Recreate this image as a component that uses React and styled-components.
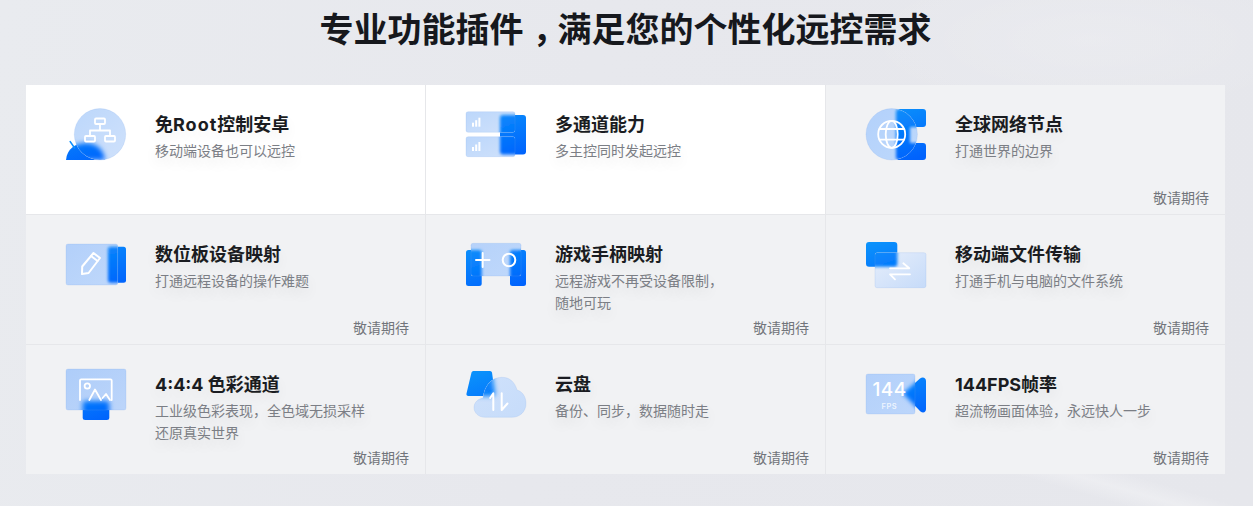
import React, { useId } from "react";
import styled, { createGlobalStyle } from "styled-components";

const Global = createGlobalStyle`
  html, body { margin: 0; padding: 0; }
  body { font-family: Inter, "Noto Sans CJK SC", "Noto Sans", sans-serif; }
`;

const Page = styled.main`
  width: 1253px;
  height: 506px;
  overflow: hidden;
  box-sizing: border-box;
  padding: 0 28px 0 26px;
  background:
    linear-gradient(16deg, transparent 0 34%, rgba(255,255,255,.26) 50%, transparent 66%) no-repeat 1000px 474px / 253px 32px,
    radial-gradient(ellipse 240px 80px at 1090px 40px, rgba(255,255,255,.16), transparent),
    linear-gradient(100deg, #e9ebef 0%, #e7e8ed 45%, #e6e7ec 100%);
`;

const Heading = styled.h1`
  margin: 0;
  height: 85px;
  padding-top: 6px;
  box-sizing: border-box;
  font-size: 34px;
  line-height: 48px;
  font-weight: 700;
  text-align: center;
  color: #16181d;
`;

const Comma = styled.span`
  font-feature-settings: "halt";
  padding: 0 8px 0 9px;
`;

const Grid = styled.section`
  display: grid;
  grid-template-columns: 400px 400px 399px;
  grid-template-rows: 130px 130px 129px;
`;

const Cell = styled.article`
  display: flex;
  flex-direction: column;
  box-sizing: border-box;
  padding: 20px 16px 0 40px;
  background: ${(p) => (p.$active ? "#ffffff" : "#f1f2f4")};
  border-right: ${(p) => (p.$last ? "0" : "1px solid #e6e7ea")};
  border-bottom: ${(p) => (p.$bottom ? "0" : "1px solid #e6e7ea")};
`;

const Main = styled.div`
  display: flex;
  gap: 29px;
  height: 83px;
`;

const IconBox = styled.div`
  flex: none;
  width: 60px;
  height: 60px;
  svg { display: block; overflow: visible; }
`;

const Copy = styled.div`
  padding-top: 6px;
`;

const Title = styled.h3`
  margin: 0 0 1px;
  font-size: 18px;
  line-height: 28px;
  font-weight: 700;
  color: #1a1c21;
  text-shadow: 0 6px 14px rgba(0, 0, 0, 0.06);
`;

const Wide = styled.span`
  letter-spacing: 1px;
`;

const Desc = styled.p`
  margin: 0;
  font-size: 14px;
  line-height: 22px;
  color: #7b7e85;
  white-space: pre-line;
  text-shadow: 0 6px 14px rgba(0, 0, 0, 0.1);
`;

const Soon = styled.span`
  align-self: flex-end;
  font-size: 14px;
  line-height: 20px;
  color: #72757b;
`;

const Stroke = { fill: "none", stroke: "#fff", strokeWidth: 1.8, strokeLinecap: "round", strokeLinejoin: "round" };

function Frosted({ blue, glass, glassFill, children, blur = 3.2 }) {
  const id = useId().replace(/[^a-zA-Z0-9]/g, "");
  return (
    <svg width="60" height="60" viewBox="0 0 60 60">
      <defs>
        <linearGradient id={`${id}b`} gradientUnits="userSpaceOnUse" x1="10" y1="0" x2="30" y2="60">
          <stop offset="0" stopColor="#0c97fb" />
          <stop offset="1" stopColor="#0062fd" />
        </linearGradient>
        <linearGradient id={`${id}g`} x1="0" y1="0" x2="1" y2="1">
          {(glassFill || ["#bcd7fb", "#cfe1fb"]).map((c, i) => (
            <stop key={i} offset={i} stopColor={c} />
          ))}
        </linearGradient>
        <filter id={`${id}f`} x="-30%" y="-30%" width="160%" height="160%">
          <feGaussianBlur stdDeviation={blur} />
        </filter>
        <mask id={`${id}m`} maskUnits="userSpaceOnUse" x="-5" y="-5" width="70" height="70">
          <rect x="-5" y="-5" width="70" height="70" fill="#fff" />
          {glass("#000")}
        </mask>
        <clipPath id={`${id}c`}>{glass("#000")}</clipPath>
      </defs>
      <g mask={`url(#${id}m)`} fill={`url(#${id}b)`}>{blue}</g>
      {glass(`url(#${id}g)`)}
      <g clipPath={`url(#${id}c)`}>
        <g filter={`url(#${id}f)`} fill={`url(#${id}b)`}>{blue}</g>
      </g>
      <g stroke="rgba(120,165,235,.3)" strokeWidth=".6">{glass("none")}</g>
      {children}
    </svg>
  );
}

const RootIcon = () => (
  <Frosted
    blue={
      <>
        <path d="M0 55 C1 44 9 38 20 38 C31 38 38 45 39 55 Z" />
        <path d="M4.2 36.6 L8.6 43" stroke="#0d8ffb" strokeWidth="1.6" strokeLinecap="round" />
      </>
    }
    glass={(f) => <circle cx="34" cy="29.3" r="25.7" fill={f} />}
    blur={2.8}
  >
    <g {...Stroke}>
      <rect x="29" y="13.5" width="10" height="5.5" rx="1" />
      <path d="M34 19 V25.5 M24 31 V25.5 H44 V31" />
      <rect x="19" y="31" width="10" height="5.5" rx="1" />
      <rect x="39" y="31" width="10" height="5.5" rx="1" />
    </g>
  </Frosted>
);

const Bars = ({ y }) => (
  <g fill="#fff">
    <rect x="6" y={y + 5} width="2" height="4" />
    <rect x="9.2" y={y + 2.5} width="2" height="6.5" />
    <rect x="12.4" y={y} width="2" height="9" />
  </g>
);

const ChannelIcon = () => (
  <Frosted
    blue={<rect x="34" y="10" width="26" height="39.5" rx="3" />}
    glass={(f) => (
      <>
        <rect x="0" y="6.7" width="49" height="20.6" rx="2" fill={f} />
        <rect x="0" y="31.7" width="49" height="20" rx="2" fill={f} />
      </>
    )}
    blur={1.6}
  >
    <Bars y={12.7} />
    <Bars y={37} />
  </Frosted>
);

const GlobeIcon = () => (
  <Frosted
    blue={
      <path d="M30 7 a3 3 0 0 1 3 -3 H57 a3 3 0 0 1 3 3 V19 a3 3 0 0 1 -3 3 H44 V38 H57 a3 3 0 0 1 3 3 V52 a3 3 0 0 1 -3 3 H33 a3 3 0 0 1 -3 -3 Z" />
    }
    glass={(f) => <circle cx="25.7" cy="29.3" r="25.7" fill={f} />}
    glassFill={["#b3d1fb", "#bdd8fb"]}
    blur={1.6}
  >
    <g {...Stroke}>
      <circle cx="25.7" cy="29.3" r="13.5" />
      <ellipse cx="25.7" cy="29.3" rx="6" ry="13.5" />
      <path d="M13.6 24 H37.8 M13.6 34.6 H37.8" />
    </g>
  </Frosted>
);

const PenIcon = () => (
  <Frosted
    blue={<rect x="42" y="11.7" width="18" height="36" rx="2.5" />}
    glass={(f) => <rect x="0" y="9" width="51.7" height="41" rx="2" fill={f} />}
    glassFill={["#b3d0fa", "#bfd8fb"]}
    blur={1.8}
  >
    <g {...Stroke} strokeWidth="2">
      <path d="M16 39 L16.2 31.5 L27.5 18 L34 23 L22.6 38 Z" />
      <path d="M25 21 L31.6 26" />
    </g>
  </Frosted>
);

const PadIcon = () => (
  <Frosted
    blue={
      <>
        <rect x="0" y="15" width="15.7" height="36" rx="2.5" />
        <rect x="44" y="15" width="16" height="36" rx="2.5" />
      </>
    }
    glass={(f) => <rect x="5" y="8.3" width="50" height="32.7" rx="2" fill={f} />}
    glassFill={["#b6d2fa", "#bfd8fb"]}
    blur={1.6}
  >
    <g {...Stroke} strokeWidth="2">
      <path d="M10 25 H23.5 M16.7 18 V32" />
      <circle cx="43" cy="25" r="6.3" />
    </g>
  </Frosted>
);

const TransferIcon = () => (
  <Frosted
    blue={<rect x="0" y="7" width="31.3" height="24.7" rx="3" />}
    glass={(f) => <rect x="9" y="17.7" width="51" height="35" rx="2" fill={f} />}
    glassFill={["#e6eefb", "#c6dbf9"]}
    blur={1.6}
  >
    <g {...Stroke}>
      <path d="M24 33.3 H43.3 L37.3 28.3" />
      <path d="M44 39.3 H24 L29 44.3" />
    </g>
  </Frosted>
);

const PictureIcon = () => (
  <Frosted
    blue={<rect x="16.7" y="36" width="26.6" height="19" rx="2.5" />}
    glass={(f) => <rect x="0" y="4" width="60" height="41" rx="2" fill={f} />}
    glassFill={["#aecdf9", "#bcd5fa"]}
    blur={2.4}
  >
    <g {...Stroke}>
      <path d="M14 35 V15.5 a1.2 1.2 0 0 1 1.2 -1.2 H44.5 a1.2 1.2 0 0 1 1.2 1.2 V35" />
      <circle cx="21.3" cy="21" r="2.7" />
      <path d="M23.3 35 L29 24.5 L35 35 M36.5 33 L40 29 L44 35" />
    </g>
  </Frosted>
);

const CloudIcon = () => (
  <Frosted
    blue={<path d="M7.5 6 H24 a2 2 0 0 1 2 1.6 L29 29 a2 2 0 0 1 -2 2 H2.5 a2 2 0 0 1 -2 -2.4 L5.5 7.5 a2 2 0 0 1 2 -1.5 Z" />}
    glass={(f) => (
      <path
        fill={f}
        d="M19 52.3 C12.5 52.3 8 47.8 8 42.6 C8 37.4 12 33.6 17 33.2 C18 21.5 25 12.3 36 12.3 C44 12.3 49 17.5 51 25 C56.5 26.5 60 31.8 60 38.5 C60 46.5 54 52.3 46 52.3 Z"
      />
    )}
    glassFill={["#cfe1fb", "#c6dcfa"]}
    blur={2.4}
  >
    <g {...Stroke} strokeWidth="2">
      <path d="M27.3 45 V28.3 L24.2 33" />
      <path d="M35.7 28.3 V45 L41.5 38.5" />
    </g>
  </Frosted>
);

const FpsBig = styled.text`
  font: 500 19px Inter, "Noto Sans", sans-serif;
  letter-spacing: 0.5px;
  fill: #fff;
`;

const FpsSmall = styled.text`
  font: 600 7.5px Inter, "Noto Sans", sans-serif;
  letter-spacing: 0.5px;
  fill: rgba(255, 255, 255, 0.78);
`;

const FpsIcon = () => (
  <Frosted
    blue={<path d="M37 28.5 L54 13.5 C57 11.5 60 13 60 16 V44 C60 47.5 57 48.5 54.5 46.5 Z" />}
    glass={(f) => <rect x="0" y="9" width="49" height="40" rx="2" fill={f} />}
    glassFill={["#b3d0fa", "#bcd6fb"]}
    blur={2}
  >
    <FpsBig x="6.4" y="31.4">144</FpsBig>
    <FpsSmall x="15.6" y="43.6">FPS</FpsSmall>
  </Frosted>
);

const items = [
  { icon: RootIcon, title: <>免<Wide>Root</Wide>控制安卓</>, desc: "移动端设备也可以远控", active: true },
  { icon: ChannelIcon, title: "多通道能力", desc: "多主控同时发起远控", active: true },
  { icon: GlobeIcon, title: "全球网络节点", desc: "打通世界的边界", soon: true },
  { icon: PenIcon, title: "数位板设备映射", desc: "打通远程设备的操作难题", soon: true },
  { icon: PadIcon, title: "游戏手柄映射", desc: "远程游戏不再受设备限制，\n随地可玩", soon: true },
  { icon: TransferIcon, title: "移动端文件传输", desc: "打通手机与电脑的文件系统", soon: true },
  { icon: PictureIcon, title: "4:4:4 色彩通道", desc: "工业级色彩表现，全色域无损采样\n还原真实世界", soon: true },
  { icon: CloudIcon, title: "云盘", desc: "备份、同步，数据随时走", soon: true },
  { icon: FpsIcon, title: "144FPS帧率", desc: "超流畅画面体验，永远快人一步", soon: true },
];

export default function App() {
  return (
    <Page>
      <Global />
      <Heading>专业功能插件<Comma>，</Comma>满足您的个性化远控需求</Heading>
      <Grid>
        {items.map((it, i) => (
          <Cell key={i} $active={it.active} $last={i % 3 === 2} $bottom={i >= 6}>
            <Main>
              <IconBox><it.icon /></IconBox>
              <Copy>
                <Title>{it.title}</Title>
                <Desc>{it.desc}</Desc>
              </Copy>
            </Main>
            {it.soon && <Soon>敬请期待</Soon>}
          </Cell>
        ))}
      </Grid>
    </Page>
  );
}
